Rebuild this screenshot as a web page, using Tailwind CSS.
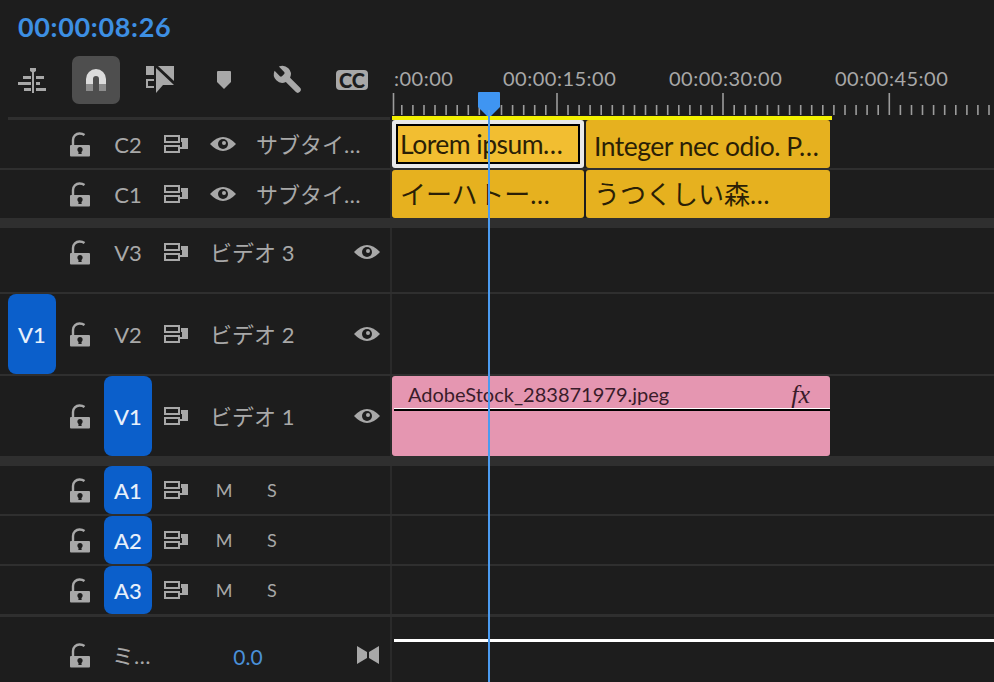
<!DOCTYPE html>
<html lang="ja">
<head>
<meta charset="UTF-8">
<title>Timeline</title>
<script src="https://cdn.jsdelivr.net/npm/@tailwindcss/browser@4"></script>
</head>
<body class="bg-[#1d1d1d]">
<svg class="absolute w-0 h-0">
  <symbol id="lock" viewBox="0 0 20 25">
    <path d="M3 14V8a6.5 6.5 0 0 1 6.5-6.5q3 0 5 1.5" fill="none" stroke="#a8a8a8" stroke-width="2.4"/>
    <rect x="0" y="13" width="20" height="11.5" rx="1" fill="#a8a8a8"/>
    <circle cx="10" cy="17.5" r="2.6" fill="#1d1d1d"/>
    <path d="M8.8 18h2.4l.5 4h-3.4z" fill="#1d1d1d"/>
  </symbol>
  <symbol id="sync" viewBox="0 0 24 18">
    <rect x="1" y="1" width="14" height="6" fill="none" stroke="#a8a8a8" stroke-width="2"/>
    <rect x="1" y="11" width="14" height="6" fill="none" stroke="#a8a8a8" stroke-width="2"/>
    <path d="M17 3h7v11h-8v-2h2V7h-1z" fill="#a8a8a8"/>
  </symbol>
  <symbol id="eye" viewBox="0 0 26 16">
    <path d="M0 8Q13-6 26 8 13 22 0 8z" fill="#a8a8a8"/>
    <circle cx="13" cy="8" r="5" fill="#1d1d1d"/>
    <circle cx="14" cy="7" r="2" fill="#a8a8a8"/>
  </symbol>
</svg>

<div class="relative h-screen w-full overflow-hidden font-['Lato','Noto_Sans_CJK_JP',sans-serif] text-[#a8a8a8]">

  <!-- header -->
  <div class="flex h-[120px]">
    <div class="w-[392px] shrink-0">
      <div class="pl-[18px] pt-2 h-[48px] text-[27px] leading-[38px] font-bold tracking-[0.65px] text-[#3d8fe3]">00:00:08:26</div>
      <div class="mt-2 flex h-12">
        <div class="w-16 flex items-center justify-center">
          <svg width="28" height="26" viewBox="18 65 28 26" fill="#a8a8a8"><path d="M30 66h6v3l-3 2-3-2z"/><rect x="32" y="68" width="2" height="23"/><rect x="23" y="74" width="8" height="3"/><rect x="36" y="74" width="8" height="3"/><rect x="18" y="80" width="13" height="3"/><rect x="36" y="80" width="4" height="3"/><rect x="24" y="86" width="7" height="3"/><rect x="36" y="86" width="10" height="3"/></svg>
        </div>
        <div class="w-16 flex items-center justify-center">
          <div class="w-12 h-12 rounded-[7px] bg-[#4e4e4e] flex items-center justify-center">
            <svg width="20" height="22" viewBox="0 0 20 22"><path d="M3.5 15V10a6.5 6.5 0 0 1 13 0v5" fill="none" stroke="#dcdcdc" stroke-width="7"/><rect y="15" width="7" height="7" fill="#8d8d8d"/><rect x="13" y="15" width="7" height="7" fill="#8d8d8d"/></svg>
          </div>
        </div>
        <div class="w-16 flex items-center justify-center">
          <svg width="29" height="28" viewBox="146 68 29 28" fill="#a8a8a8"><rect x="146" y="68" width="8" height="9"/><path d="M154 81h-8v9h8v-2h-6v-5h6z"/><path d="M158 68h16v15z"/><path d="M156 70l18 17h-11l-7 8z"/></svg>
        </div>
        <div class="w-16 flex items-center justify-center">
          <svg width="14" height="18" viewBox="0 0 14 18" fill="#a8a8a8"><path d="M1 0h12a1 1 0 0 1 1 1v10l-7 7-7-7V1a1 1 0 0 1 1-1z"/></svg>
        </div>
        <div class="w-16 flex items-center justify-center">
          <svg width="34" height="34" viewBox="0 0 24 24" fill="#a8a8a8"><g transform="translate(24 0) scale(-1 1)"><path d="M14.7 6.3a1 1 0 0 0 0 1.4l1.6 1.6a1 1 0 0 0 1.4 0l3.77-3.77a6 6 0 0 1-7.94 7.94l-6.91 6.91a2.12 2.12 0 0 1-3-3l6.91-6.91a6 6 0 0 1 7.94-7.94l-3.76 3.76z"/></g></svg>
        </div>
        <div class="w-16 flex items-center justify-center">
          <div class="w-8 h-5 rounded-[4px] bg-[#a8a8a8] text-[#1d1d1d] text-[20px] font-black leading-5 text-center tracking-[0px]">CC</div>
        </div>
      </div>
      <div class="ml-2 mr-[2px] mt-[13px] h-[3px] bg-[#2f2f2f]"></div>
    </div>
    <div class="flex-1 min-w-0 pt-16">
      <div class="flex h-7 text-[20px] leading-7 tracking-[0.5px] whitespace-nowrap overflow-hidden">
        <div class="w-[111px] pl-[2px] shrink-0">:00:00</div>
        <div class="w-[166px] shrink-0">00:00:15:00</div>
        <div class="w-[166px] shrink-0">00:00:30:00</div>
        <div class="w-[166px] shrink-0">00:00:45:00</div>
      </div>
      <svg class="block" width="602" height="24" viewBox="0 0 602 24">
        <path fill="none" stroke="#9c9c9c" stroke-width="1.6" d="M1.5 1v22M165 1v22M331 1v22M497.3 1v22M9.8 13v10M20.9 13v10M32 13v10M43 13v10M54.1 13v10M65.2 13v10M76.3 13v10M87.3 13v10M98.4 13v10M109.5 13v10M120.6 13v10M131.7 13v10M142.7 13v10M153.8 13v10M176 13v10M187.1 13v10M198.1 13v10M209.2 13v10M220.3 13v10M231.4 13v10M242.5 13v10M253.5 13v10M264.6 13v10M275.7 13v10M286.8 13v10M297.9 13v10M308.9 13v10M320 13v10M342.2 13v10M353.3 13v10M364.3 13v10M375.4 13v10M386.5 13v10M397.6 13v10M408.7 13v10M419.7 13v10M430.8 13v10M441.9 13v10M453 13v10M464.1 13v10M475.1 13v10M486.2 13v10M508.4 13v10M519.5 13v10M530.5 13v10M541.6 13v10M552.7 13v10M563.8 13v10M574.9 13v10M585.9 13v10M597 13v10"/>
      </svg>
      <div class="h-1 w-[440px] bg-[#f3f000]"></div>
    </div>
  </div>

  <!-- C2 -->
  <div class="flex h-[50px] border-b-2 border-[#2f2f2f]">
    <div class="w-[392px] shrink-0 pl-2 flex items-center border-r-2 border-[#2a2a2a] text-[22px]">
      <div class="w-12"></div>
      <div class="w-12 flex justify-center"><svg class="w-5 h-[25px]"><use href="#lock"/></svg></div>
      <div class="w-12 text-center text-[22px]">C2</div>
      <div class="w-12 flex justify-center"><svg class="w-6 h-[18px]"><use href="#sync"/></svg></div>
      <div class="w-12 flex justify-center pr-[2px]"><svg class="w-[26px] h-4"><use href="#eye"/></svg></div>
      <div class="pl-2 whitespace-nowrap">サブタイ…</div>
    </div>
    <div class="flex gap-[2px] h-12 text-[#2b1f06]">
      <div class="w-[192px] h-12 rounded-[3px] bg-[#e9e9e9] p-1">
        <div class="h-full border-2 border-black bg-[#f2be31] pl-[2px] text-[26.5px] tracking-[-0.5px] leading-[36px] whitespace-nowrap">Lorem ipsum…</div>
      </div>
      <div class="w-[244px] h-12 rounded-[3px] bg-[#e6b11f] pl-2 text-[26.5px] tracking-[-0.5px] leading-[52px] whitespace-nowrap">Integer nec odio. P…</div>
    </div>
  </div>

  <!-- C1 -->
  <div class="flex h-12">
    <div class="w-[392px] shrink-0 pl-2 flex items-center border-r-2 border-[#2a2a2a] text-[22px]">
      <div class="w-12"></div>
      <div class="w-12 flex justify-center"><svg class="w-5 h-[25px]"><use href="#lock"/></svg></div>
      <div class="w-12 text-center text-[22px]">C1</div>
      <div class="w-12 flex justify-center"><svg class="w-6 h-[18px]"><use href="#sync"/></svg></div>
      <div class="w-12 flex justify-center pr-[2px]"><svg class="w-[26px] h-4"><use href="#eye"/></svg></div>
      <div class="pl-2 whitespace-nowrap">サブタイ…</div>
    </div>
    <div class="flex gap-[2px] h-12 text-[#2b1f06]">
      <div class="w-[192px] rounded-[3px] bg-[#e6b11f] pl-2 text-[26px] leading-[48px] whitespace-nowrap">イーハトー…</div>
      <div class="w-[244px] rounded-[3px] bg-[#e6b11f] pl-2 text-[26px] leading-[48px] whitespace-nowrap">うつくしい森…</div>
    </div>
  </div>

  <div class="h-[10px] bg-[#2f2f2f]"></div>

  <!-- V3 -->
  <div class="flex h-[66px] border-b-2 border-[#2f2f2f]">
    <div class="w-[392px] shrink-0 pl-2 pb-4 flex items-center border-r-2 border-[#2a2a2a] text-[22px]">
      <div class="w-12"></div>
      <div class="w-12 flex justify-center"><svg class="w-5 h-[25px]"><use href="#lock"/></svg></div>
      <div class="w-12 text-center text-[22px]">V3</div>
      <div class="w-12 flex justify-center"><svg class="w-6 h-[18px]"><use href="#sync"/></svg></div>
      <div class="pl-[10px] flex-1 whitespace-nowrap">ビデオ 3</div>
      <div class="w-[48px] flex justify-center pl-[2px]"><svg class="w-[26px] h-4"><use href="#eye"/></svg></div>
    </div>
  </div>

  <!-- V2 -->
  <div class="flex h-[82px] border-b-2 border-[#2f2f2f]">
    <div class="w-[392px] shrink-0 pl-2 flex items-center border-r-2 border-[#2a2a2a] text-[22px]">
      <div class="w-12 h-20 rounded-lg bg-[#0b5fcb] text-[#e8f0fb] text-[22px] font-medium flex items-center justify-center">V1</div>
      <div class="w-12 flex justify-center"><svg class="w-5 h-[25px]"><use href="#lock"/></svg></div>
      <div class="w-12 text-center text-[22px]">V2</div>
      <div class="w-12 flex justify-center"><svg class="w-6 h-[18px]"><use href="#sync"/></svg></div>
      <div class="pl-[10px] flex-1 whitespace-nowrap">ビデオ 2</div>
      <div class="w-[48px] flex justify-center pl-[2px]"><svg class="w-[26px] h-4"><use href="#eye"/></svg></div>
    </div>
  </div>

  <!-- V1 -->
  <div class="flex h-20">
    <div class="w-[392px] shrink-0 pl-2 flex items-center border-r-2 border-[#2a2a2a] text-[22px]">
      <div class="w-12"></div>
      <div class="w-12 flex justify-center"><svg class="w-5 h-[25px]"><use href="#lock"/></svg></div>
      <div class="w-12 h-20 rounded-lg bg-[#0b5fcb] text-[#e8f0fb] text-[22px] font-medium flex items-center justify-center">V1</div>
      <div class="w-12 flex justify-center"><svg class="w-6 h-[18px]"><use href="#sync"/></svg></div>
      <div class="pl-[10px] flex-1 whitespace-nowrap">ビデオ 1</div>
      <div class="w-[48px] flex justify-center pl-[2px]"><svg class="w-[26px] h-4"><use href="#eye"/></svg></div>
    </div>
    <div class="w-[438px] h-20 rounded-[3px] bg-[#e596b1] text-[#3a1c2a]">
      <div class="h-8 pl-4 pr-5 pt-[4px] flex items-center justify-between text-[20px]">
        <span>AdobeStock_283871979.jpeg</span>
        <span class="font-['Liberation_Serif',serif] italic text-[26px]">fx</span>
      </div>
      <div class="ml-[2px] h-[3px] border-t border-white bg-black"></div>
    </div>
  </div>

  <div class="h-[10px] bg-[#2f2f2f]"></div>

  <!-- A1 -->
  <div class="flex h-[50px] border-b-2 border-[#2f2f2f]">
    <div class="w-[392px] shrink-0 pl-2 flex items-center border-r-2 border-[#2a2a2a]">
      <div class="w-12"></div>
      <div class="w-12 flex justify-center"><svg class="w-5 h-[25px]"><use href="#lock"/></svg></div>
      <div class="w-12 h-12 rounded-lg bg-[#0b5fcb] text-[#e8f0fb] text-[22px] font-medium flex items-center justify-center">A1</div>
      <div class="w-12 flex justify-center"><svg class="w-6 h-[18px]"><use href="#sync"/></svg></div>
      <div class="w-12 text-center text-[18px]">M</div>
      <div class="w-12 text-center text-[18px]">S</div>
    </div>
  </div>

  <!-- A2 -->
  <div class="flex h-[50px] border-b-2 border-[#2f2f2f]">
    <div class="w-[392px] shrink-0 pl-2 flex items-center border-r-2 border-[#2a2a2a]">
      <div class="w-12"></div>
      <div class="w-12 flex justify-center"><svg class="w-5 h-[25px]"><use href="#lock"/></svg></div>
      <div class="w-12 h-12 rounded-lg bg-[#0b5fcb] text-[#e8f0fb] text-[22px] font-medium flex items-center justify-center">A2</div>
      <div class="w-12 flex justify-center"><svg class="w-6 h-[18px]"><use href="#sync"/></svg></div>
      <div class="w-12 text-center text-[18px]">M</div>
      <div class="w-12 text-center text-[18px]">S</div>
    </div>
  </div>

  <!-- A3 -->
  <div class="flex h-[51px] border-b-[3px] border-[#2f2f2f]">
    <div class="w-[392px] shrink-0 pl-2 flex items-center border-r-2 border-[#2a2a2a]">
      <div class="w-12"></div>
      <div class="w-12 flex justify-center"><svg class="w-5 h-[25px]"><use href="#lock"/></svg></div>
      <div class="w-12 h-12 rounded-lg bg-[#0b5fcb] text-[#e8f0fb] text-[22px] font-medium flex items-center justify-center">A3</div>
      <div class="w-12 flex justify-center"><svg class="w-6 h-[18px]"><use href="#sync"/></svg></div>
      <div class="w-12 text-center text-[18px]">M</div>
      <div class="w-12 text-center text-[18px]">S</div>
    </div>
  </div>

  <!-- master -->
  <div class="flex h-[76px]">
    <div class="w-[392px] shrink-0 pl-2 flex items-center border-r-2 border-[#2a2a2a]">
      <div class="w-12"></div>
      <div class="w-12 flex justify-center"><svg class="w-5 h-[25px]"><use href="#lock"/></svg></div>
      <div class="w-[96px] pl-[8px] text-[22px] whitespace-nowrap">ミ…</div>
      <div class="w-[96px] pt-1 text-center text-[21px] text-[#4a90d9]">0.0</div>
      <div class="flex-1 flex justify-end pr-[11px]"><svg width="22" height="18" viewBox="0 0 22 18" fill="#a8a8a8"><path d="M0 0l10 6v6L0 18zM22 0L12 6v6l10 6z"/></svg></div>
    </div>
    <div class="flex-1 pl-[2px] pt-[22px]"><div class="h-[3px] bg-white"></div></div>
  </div>

  <!-- playhead -->
  <div class="absolute left-[478px] top-[92px] bottom-0 w-[22px]">
    <svg class="block" width="22" height="24" viewBox="0 0 22 24"><path d="M1 0h20a1 1 0 0 1 1 1v14l-9 9H9L0 15V1a1 1 0 0 1 1-1z" fill="#3f95f2"/></svg>
    <div class="absolute left-[10px] top-[18px] bottom-0 w-[2px] bg-[#4b9bf0]"></div>
  </div>
</div>
</body>
</html>
